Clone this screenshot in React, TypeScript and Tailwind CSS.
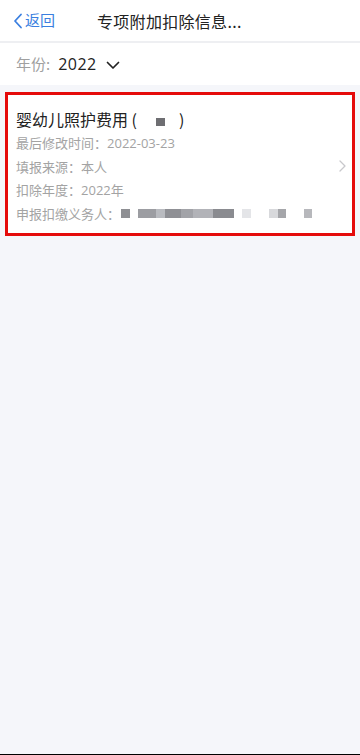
import React from "react";

const mosaic: { w: number; c: string }[] = [
  { w: 9, c: "#8e8f93" },
  { w: 8, c: "#ffffff" },
  { w: 18, c: "#9c9da2" },
  { w: 9, c: "#b9bbc0" },
  { w: 16, c: "#8f9095" },
  { w: 12, c: "#a2a3a8" },
  { w: 20, c: "#b2b3b8" },
  { w: 21, c: "#8a8b90" },
  { w: 8, c: "#ffffff" },
  { w: 9, c: "#e4e5e8" },
  { w: 18, c: "#ffffff" },
  { w: 9, c: "#d8d9dc" },
  { w: 8, c: "#a5a6aa" },
  { w: 18, c: "#ffffff" },
  { w: 8, c: "#b7b8bc" },
];

const App = () => {
  return (
    <div
      className="w-[360px] h-[755px] flex flex-col bg-[#f5f6fa] border-b border-black"
      style={{ fontFamily: '"Noto Sans CJK SC", "Noto Sans", sans-serif' }}
    >
      {/* header */}
      <div className="h-[41px] bg-white flex items-center">
        <div className="flex items-center pl-[13px] text-[#3a7fe0] text-[15px] w-[97px]">
          <svg width="10" height="16" viewBox="0 0 10 16" fill="none">
            <path d="M8 1.5 L2 8 L8 14.5" stroke="#3a7fe0" strokeWidth="1.8" strokeLinecap="round" strokeLinejoin="round" />
          </svg>
          <span className="ml-[2px]">返回</span>
        </div>
        <div className="text-[16px] text-[#222] tracking-[0.3px]">专项附加扣除信息...</div>
      </div>
      <div className="h-[2px] bg-[#eeeff2]" />
      {/* year */}
      <div className="h-[42px] bg-white flex items-center pl-[16px]">
        <span className="text-[15px] text-[#a0a0a0]">年份:</span>
        <span className="ml-[8px] text-[16px] text-[#222] tracking-[0.5px]" style={{ fontFamily: '"Open Sans", sans-serif' }}>2022</span>
        <svg className="ml-[9px] mt-[2px]" width="14" height="9" viewBox="0 0 14 9" fill="none">
          <path d="M1.5 1.5 L7 7 L12.5 1.5" stroke="#222" strokeWidth="1.7" strokeLinecap="round" strokeLinejoin="round" />
        </svg>
      </div>
      {/* card */}
      <div className="mt-[7px] mx-[5px] border-[3px] border-[#e50b0b] bg-white relative px-[8px] pt-[13px] pb-[8px]">
        <div className="flex items-center text-[16px] text-[#222] leading-[22px]">
          <span>婴幼儿照护费用 (</span>
          <span className="w-[9px] h-[8px] bg-[#6e6e72] mt-[6px] ml-[19px]" />
          <span className="ml-[14px]">)</span>
        </div>
        <div className="mt-[1px] flex flex-col text-[13px] text-[#a3a3a3] leading-[23px]">
          <div>
            最后修改时间：<span style={{ fontFamily: '"Open Sans", sans-serif' }}>2022-03-23</span>
          </div>
          <div>填报来源：本人</div>
          <div>
            扣除年度：<span style={{ fontFamily: '"Open Sans", sans-serif' }}>2022</span>年
          </div>
          <div className="flex items-center">
            <span>申报扣缴义务人：</span>
            <span className="flex h-[9px] ml-[1px]">
              {mosaic.map((m, i) => (
                <span key={i} className="h-full block" style={{ width: m.w, background: m.c }} />
              ))}
            </span>
          </div>
        </div>
        <svg className="absolute right-[6px] top-[65px]" width="7" height="12" viewBox="0 0 7 12" fill="none">
          <path d="M1 1 L6 6 L1 11" stroke="#c8c8cc" strokeWidth="1.3" strokeLinecap="round" strokeLinejoin="round" />
        </svg>
      </div>
    </div>
  );
};

export default App;
